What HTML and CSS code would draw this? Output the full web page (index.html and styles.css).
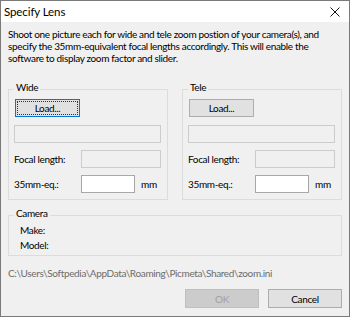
FILE: index.html
```html
<!DOCTYPE html>
<html>
<head>
<meta charset="utf-8">
<link rel="stylesheet" href="styles.css">
</head>
<body>
<div class="window">
  <div class="titlebar">
    <span class="title">Specify Lens</span>
    <svg class="close" width="10" height="10" viewBox="0 0 10 10"><path d="M0.5 0.5L9.5 9.5M9.5 0.5L0.5 9.5" stroke="#111" stroke-width="1" fill="none"/></svg>
  </div>
  <div class="content">
    <p class="intro">Shoot one picture each for wide and tele zoom postion of your camera(s), and specify the 35mm-equivalent focal lengths accordingly. This will enable the software to display zoom factor and slider.</p>
    <div class="groups">
      <fieldset class="group lens">
        <legend>Wide</legend>
        <div class="inner">
          <button class="btn focused"><span class="focusrect">Load...</span></button>
          <div class="box disabled full"></div>
          <div class="row"><span class="lbl">Focal length:</span><div class="box disabled wide"></div></div>
          <div class="row"><span class="lbl">35mm-eq.:</span><div class="box white"></div><span class="unit">mm</span></div>
        </div>
      </fieldset>
      <fieldset class="group lens">
        <legend>Tele</legend>
        <div class="inner">
          <button class="btn"><span class="focusrect plain">Load...</span></button>
          <div class="box disabled full"></div>
          <div class="row"><span class="lbl">Focal length:</span><div class="box disabled wide"></div></div>
          <div class="row"><span class="lbl">35mm-eq.:</span><div class="box white"></div><span class="unit">mm</span></div>
        </div>
      </fieldset>
    </div>
    <fieldset class="group camera">
      <legend>Camera</legend>
      <div class="cinner">
        <div class="cline">Make:</div>
        <div class="cline">Model:</div>
      </div>
    </fieldset>
    <div class="path">C:\Users\Softpedia\AppData\Roaming\Picmeta\Shared\zoom.ini</div>
    <div class="actions">
      <button class="btn action disabledbtn">OK</button>
      <button class="btn action">Cancel</button>
    </div>
  </div>
</div>
</body>
</html>
```
FILE: styles.css
```css
* { box-sizing: border-box; }
html, body { margin: 0; padding: 0; }
body {
  font-family: "Lato", "Noto Sans", sans-serif;
  font-size: 10px;
  letter-spacing: -0.35px;
  color: #000;
  background: #f0f0f0;
}
.window {
  width: 350px;
  height: 317px;
  border: 1px solid #7a7a7a;
  background: #f0f0f0;
  display: flex;
  flex-direction: column;
}
.titlebar {
  height: 21px;
  background: #fff;
  display: flex;
  align-items: center;
  justify-content: space-between;
  padding: 0 9px 0 3px;
  flex: none;
}
.title { font-size: 11.5px; line-height: 14px; letter-spacing: -0.1px; }
.close { display: block; }
.content {
  padding: 0 7px;
  display: flex;
  flex-direction: column;
}
.intro {
  margin: 6px 0 0;
  line-height: 12px;
}
.groups {
  display: flex;
  gap: 14px;
  margin-top: 17px;
}
.group {
  margin: 0;
  padding: 0;
  border: 1px solid #dcdcdc;
  min-width: 0;
}
.group legend {
  padding: 0 2px 4px;
  margin-left: 5px;
  line-height: 12px;
}
.lens { width: 160px; }
.inner {
  padding: 2px 6px 6px 5px;
  display: flex;
  flex-direction: column;
}
.btn {
  font: inherit;
  letter-spacing: inherit;
  color: #000;
  width: 65px;
  height: 18px;
  padding: 0;
  background: #e1e1e1;
  border: 1px solid #adadad;
  margin-left: 1px;
  display: flex;
  align-items: center;
  justify-content: center;
}
.btn.focused { border-color: #0078d7; padding: 1px; }
.focusrect {
  display: flex;
  align-items: center;
  justify-content: center;
  width: 100%;
  height: 100%;
  border: 1px dotted #333;
}
.focusrect.plain { border-color: transparent; }
.box {
  height: 18px;
  border: 1px solid #cccccc;
}
.box.disabled { background: #f0f0f0; }
.box.full { margin-top: 8px; }
.box.wide { width: 81px; }
.box.white { width: 54px; background: #fff; border-color: #a8a8a8; }
.row {
  display: flex;
  align-items: center;
  margin-top: 7px;
}
.lbl { width: 67px; }
.unit { margin-left: 6px; }
.camera { margin-top: 7px; }
.cinner { padding: 0 6px 2px 11px; }
.cline { line-height: 15px; }
.path {
  margin-top: 10px;
  line-height: 14px;
  color: #6d6d6d;
}
.actions {
  display: flex;
  justify-content: flex-end;
  gap: 9px;
  margin-top: 9px;
}
.btn.action { width: 74px; height: 19px; margin: 0; }
.disabledbtn { background: #cccccc; border-color: #bfbfbf; color: #a0a0a0; }
```
